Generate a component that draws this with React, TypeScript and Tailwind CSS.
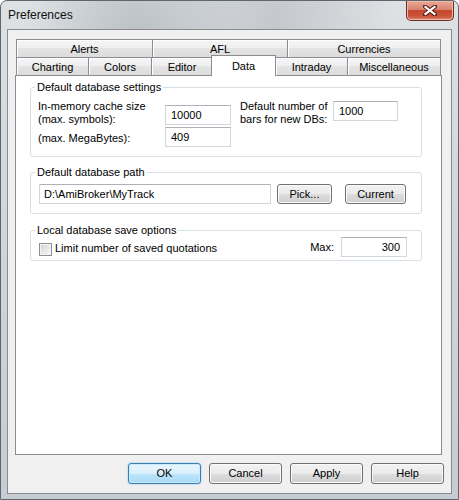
import React from "react";

const tabBg =
  "bg-[linear-gradient(to_bottom,#f5f5f5_0%,#efefef_45%,#e4e4e4_50%,#dcdcdc_100%)] shadow-[inset_1px_1px_0_#ffffff]";

function Tab({ label, w, first }: { label: string; w: string; first?: boolean }) {
  return (
    <div
      className={`${w} ${first ? "" : "-ml-px"} flex h-[18px] shrink-0 items-center justify-center border border-b-0 border-[#898c95] ${tabBg} pt-[1px] leading-[13px]`}
    >
      {label}
    </div>
  );
}

function Btn({ label, w, primary, h }: { label: string; w: string; primary?: boolean; h: string }) {
  return (
    <div
      className={`${w} ${h} flex shrink-0 items-center justify-center rounded-[3px] border leading-[13px] ${
        primary
          ? "border-[#3c7fb1] bg-[linear-gradient(to_bottom,#eaf6fd_0%,#d9f0fc_50%,#bee6fd_50%,#a7d9f5_100%)] shadow-[inset_0_0_0_1px_#c8ecff,0_0_2px_#7fc6ec]"
          : "border-[#707070] bg-[linear-gradient(to_bottom,#f2f2f2_0%,#ebebeb_50%,#dddddd_50%,#cfcfcf_100%)] shadow-[inset_0_0_0_1px_#fbfbfb]"
      }`}
    >
      {label}
    </div>
  );
}

function Field({ value, w, right, extra }: { value: string; w: string; right?: boolean; extra?: string }) {
  return (
    <div
      className={`${w} ${extra ?? ""} flex h-[20px] shrink-0 items-center border border-[#d3d7dc] border-t-[#aeb2b8] bg-white leading-[13px] ${
        right ? "justify-end pr-[6px]" : "pl-[5px]"
      }`}
    >
      {value}
    </div>
  );
}

export default function App() {
  return (
    <div className="h-[500px] w-[459px] bg-white">
      <div
        className="flex h-[500px] w-[459px] flex-col overflow-hidden rounded-t-[7px] border border-[#5e666e] bg-[radial-gradient(ellipse_at_30%_10%,#b9bec3_0%,transparent_25%),radial-gradient(ellipse_at_60%_5%,#c4c8cc_0%,transparent_30%),linear-gradient(to_bottom,#dde1e4_0%,#d2d7db_40%,#c6ccd1_100%)] text-[11px] text-black"
        style={{ fontFamily: '"Liberation Sans", Arial, sans-serif' }}
      >
        {/* title bar */}
        <div className="flex h-[28px] shrink-0 items-start">
          <div className="mt-[7px] pl-[7px] text-[12px] leading-[15px] text-[#111]">Preferences</div>
          <div className="ml-auto mr-[4px] flex h-[20px] w-[48px] items-center justify-center rounded-b-[5px] border border-t-0 border-[#6b2f25] bg-[linear-gradient(to_bottom,#e9a897_0%,#d9846f_45%,#c5472d_50%,#c9553a_80%,#d98a6c_100%)] shadow-[inset_0_0_0_1px_#f0b8a8]">
            <svg width="14" height="11" viewBox="0 0 14 11">
              <path d="M2 1.5 L12 9.5 M12 1.5 L2 9.5" stroke="#5a2218" strokeWidth="4.2" strokeLinecap="square" />
              <path d="M2.5 2 L11.5 9 M11.5 2 L2.5 9" stroke="#ffffff" strokeWidth="2.2" strokeLinecap="square" />
            </svg>
          </div>
        </div>

        {/* client */}
        <div className="mx-[6px] flex h-[465px] shrink-0 flex-col border border-[#858b91] bg-[#f0f0f0]">
          <div className="ml-[7px] mt-[9px] flex w-[427px] flex-col">
            <div className="flex pl-[1px]">
              <Tab label="Alerts" w="w-[137px]" first />
              <Tab label="AFL" w="w-[136px]" />
              <Tab label="Currencies" w="w-[154px]" />
            </div>
            <div className="flex h-[18px] items-end pl-[1px]">
              <Tab label="Charting" w="w-[73px]" first />
              <Tab label="Colors" w="w-[64px]" />
              <Tab label="Editor" w="w-[62px]" />
              <div className="relative z-10 -mb-px -ml-[2px] flex h-[21px] w-[65px] shrink-0 items-center justify-center border border-b-0 border-[#898c95] bg-white leading-[13px]">
                Data
              </div>
              <Tab label="Intraday" w="w-[73px]" />
              <Tab label="Miscellaneous" w="w-[94px]" />
            </div>
            <div className="flex h-[380px] flex-col border border-[#898c95] bg-white">
              {/* group 1 */}
              <fieldset className="ml-[14px] mt-[5px] h-[76px] w-[392px] rounded-[3px] border border-[#d5dfe5] pl-[7px]">
                <legend className="-ml-[3px] px-[2px] leading-[13px]">Default database settings</legend>
                <div className="flex">
                  <div className="flex w-[193px] flex-col">
                    <div className="mt-[6px] flex justify-between">
                      <div className="leading-[13px]">
                        In-memory cache size
                        <br />
                        (max. symbols):
                      </div>
                      <Field value="10000" w="w-[66px]" extra="mt-[5px]" />
                    </div>
                    <div className="mt-[1px] flex justify-between">
                      <div className="mt-[5px] leading-[13px]">(max. MegaBytes):</div>
                      <Field value="409" w="w-[66px]" />
                    </div>
                  </div>
                  <div className="ml-[9px] flex">
                    <div className="mt-[6px] w-[93px] leading-[13px]">
                      Default number of
                      <br />
                      bars for new DBs:
                    </div>
                    <Field value="1000" w="w-[65px]" extra="mt-[7px]" />
                  </div>
                </div>
              </fieldset>

              {/* group 2 */}
              <fieldset className="ml-[14px] mt-[9px] h-[48px] w-[392px] rounded-[3px] border border-[#d5dfe5] pl-[7px]">
                <legend className="-ml-[3px] px-[2px] leading-[13px]">Default database path</legend>
                <div className="mt-[5px] flex">
                  <Field value="D:\AmiBroker\MyTrack" w="w-[232px]" extra="ml-[1px] !pl-[4px]" />
                  <div className="ml-[6px]">
                    <Btn label="Pick..." w="w-[55px]" h="h-[20px]" />
                  </div>
                  <div className="ml-[13px]">
                    <Btn label="Current" w="w-[61px]" h="h-[20px]" />
                  </div>
                </div>
              </fieldset>

              {/* group 3 */}
              <fieldset className="ml-[14px] mt-[10px] h-[37px] w-[392px] rounded-[3px] border border-[#d5dfe5] pl-[7px]">
                <legend className="-ml-[3px] px-[2px] leading-[13px]">Local database save options</legend>
                <div className="flex">
                  <div className="ml-[1px] mt-[6px] h-[13px] w-[13px] shrink-0 border border-[#8e8f8f] bg-[linear-gradient(135deg,#d2d2d2_0%,#eaeaea_60%,#f8f8f8_100%)] shadow-[inset_0_0_0_1px_#f4f4f4]" />
                  <div className="ml-[3px] mt-[5px] leading-[13px]">Limit number of saved quotations</div>
                  <div className="ml-auto mt-[4px] leading-[13px]">Max:</div>
                  <Field value="300" w="w-[66px]" right extra="ml-[7px] mr-[14px]" />
                </div>
              </fieldset>
            </div>
          </div>

          {/* dialog buttons */}
          <div className="mt-[8px] flex justify-end gap-[8px] pr-[7px]">
            <Btn label="OK" w="w-[73px]" h="h-[21px]" primary />
            <Btn label="Cancel" w="w-[73px]" h="h-[21px]" />
            <Btn label="Apply" w="w-[73px]" h="h-[21px]" />
            <Btn label="Help" w="w-[73px]" h="h-[21px]" />
          </div>
        </div>
      </div>
    </div>
  );
}
